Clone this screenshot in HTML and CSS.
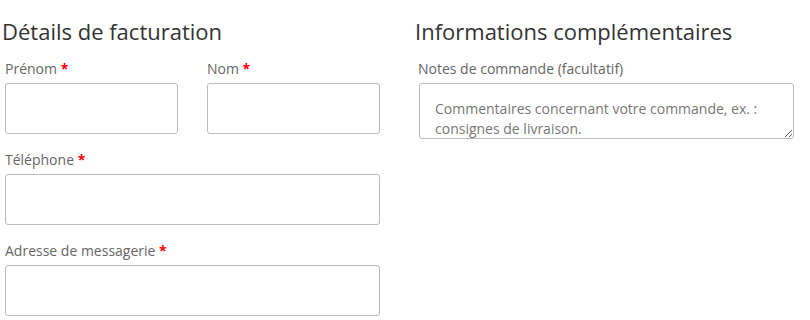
FILE: index.html
```html
<!DOCTYPE html>
<html lang="fr">
<head>
  <meta charset="UTF-8" />
  <meta name="viewport" content="width=device-width, initial-scale=1.0" />
  <title>Commande</title>
  <link rel="stylesheet" href="styles.css">
</head>
<body>
  <form class="checkout">
    <section class="col">
      <h3>Détails de facturation</h3>
      <div class="row">
        <p class="field">
          <label for="prenom">Prénom <abbr class="required">*</abbr></label>
          <input type="text" id="prenom">
        </p>
        <p class="field">
          <label for="nom">Nom <abbr class="required">*</abbr></label>
          <input type="text" id="nom">
        </p>
      </div>
      <p class="field">
        <label for="tel">Téléphone <abbr class="required">*</abbr></label>
        <input type="tel" id="tel">
      </p>
      <p class="field">
        <label for="email">Adresse de messagerie <abbr class="required">*</abbr></label>
        <input type="email" id="email">
      </p>
    </section>

    <section class="col">
      <h3>Informations complémentaires</h3>
      <p class="field">
        <label for="notes">Notes de commande (facultatif)</label>
        <textarea id="notes" placeholder="Commentaires concernant votre commande, ex. : consignes de livraison."></textarea>
      </p>
    </section>
  </form>
</body>
</html>
```

FILE: styles.css
```css
* {
  margin: 0;
  padding: 0;
  box-sizing: border-box;
}

body {
  font-family: "Open Sans", Arial, sans-serif;
  font-size: 14px;
  line-height: 20px;
  color: #666;
  background: #fff;
}

.checkout {
  display: grid;
  grid-template-columns: 375px 375px;
  column-gap: 38px;
  padding: 15px 0 0 5px;
}

.col h3 {
  font-size: 22px;
  font-weight: 400;
  line-height: 32px;
  color: #333;
  margin: 0 0 12px -3px;
}

.row {
  display: grid;
  grid-template-columns: 1fr 1fr;
  column-gap: 29px;
}

.field {
  margin-bottom: 16px;
}

.field label {
  display: block;
  margin-bottom: 4px;
}

.required {
  color: #f00;
  font-weight: 700;
  text-decoration: none;
  border: 0;
}

.field input,
.field textarea {
  display: block;
  width: 100%;
  height: 51px;
  border: 1px solid #bbb;
  border-radius: 3px;
  background: #fff;
  font-family: inherit;
  font-size: 14px;
  color: #333;
  padding: 0 12px;
}

.field textarea {
  height: 56px;
  margin-left: 1px;
  padding: 15px 15px 0;
  line-height: 20px;
  overflow: hidden;
}

.field textarea::placeholder {
  color: #777;
  opacity: 1;
}
```
